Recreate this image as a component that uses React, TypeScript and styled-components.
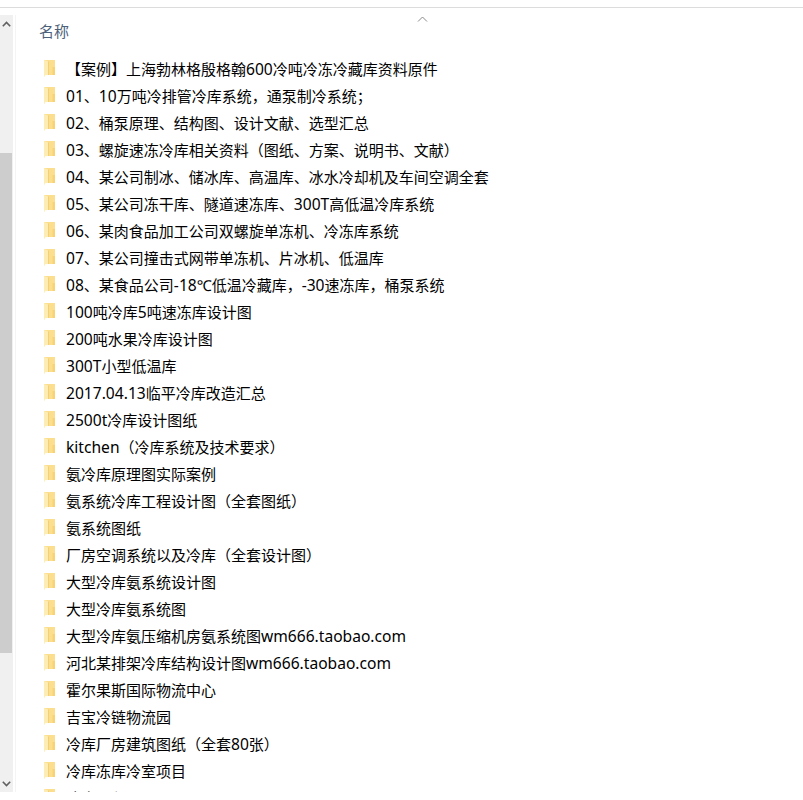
import React from "react";
import styled, { createGlobalStyle } from "styled-components";

const GlobalStyle = createGlobalStyle`
    html, body {
        margin: 0;
        padding: 0;
        background: #fff;
    }
`;

const Page = styled.div`
    width: 803px;
    height: 800px;
    overflow: hidden;
    background: #fff;
    font-family: "Noto Sans", "Noto Sans CJK SC", sans-serif;
`;

const TopEdge = styled.div`
    height: 7px;
    border-bottom: 1px solid #dcdcdc;
    margin-bottom: 7px;
`;

const Explorer = styled.div`
    position: relative;
    display: flex;
    height: 777px;
`;

const ScrollTrack = styled.div`
    width: 13px;
    background: #f0f0f0;
    display: flex;
    flex-direction: column;
    align-items: stretch;
`;

const ScrollButton = styled.div`
    height: 17px;
    display: flex;
    align-items: center;
    justify-content: center;
    color: #606060;
`;

const ScrollRest = styled.div<{ $size: number }>`
    height: ${(p) => p.$size}px;
`;

const ScrollThumb = styled.div`
    height: 500px;
    background: #cdcdcd;
    margin-right: 1px;
`;

const Pane = styled.div`
    flex: 1;
    margin-left: 2px;
    border-left: 1px solid #f4f4f4;
    overflow: hidden;
    padding-left: 23px;
`;

const ColumnHeader = styled.div`
    height: 30px;
    display: flex;
    align-items: center;
    font-size: 15px;
    color: #4c607a;
    margin-bottom: 10px;
`;

const SortArrow = styled.svg`
    position: absolute;
    left: 417px;
    top: 0;
`;

const FileList = styled.ul`
    list-style: none;
    margin: 0;
    padding: 0 0 0 4px;
`;

const Row = styled.li`
    height: 27px;
    display: flex;
    align-items: center;
    gap: 9px;
    font-size: 15px;
    color: #000;
    white-space: nowrap;
`;

// latin runs come out a little small next to the CJK at 15px
const Latin = styled.span`
    font-size: 15.6px;
`;

const names = [
    "【案例】上海勃林格殷格翰600冷吨冷冻冷藏库资料原件",
    "01、10万吨冷排管冷库系统，通泵制冷系统；",
    "02、桶泵原理、结构图、设计文献、选型汇总",
    "03、螺旋速冻冷库相关资料（图纸、方案、说明书、文献）",
    "04、某公司制冰、储冰库、高温库、冰水冷却机及车间空调全套",
    "05、某公司冻干库、隧道速冻库、300T高低温冷库系统",
    "06、某肉食品加工公司双螺旋单冻机、冷冻库系统",
    "07、某公司撞击式网带单冻机、片冰机、低温库",
    "08、某食品公司-18℃低温冷藏库，-30速冻库，桶泵系统",
    "100吨冷库5吨速冻库设计图",
    "200吨水果冷库设计图",
    "300T小型低温库",
    "2017.04.13临平冷库改造汇总",
    "2500t冷库设计图纸",
    "kitchen（冷库系统及技术要求）",
    "氨冷库原理图实际案例",
    "氨系统冷库工程设计图（全套图纸）",
    "氨系统图纸",
    "厂房空调系统以及冷库（全套设计图）",
    "大型冷库氨系统设计图",
    "大型冷库氨系统图",
    "大型冷库氨压缩机房氨系统图wm666.taobao.com",
    "河北某排架冷库结构设计图wm666.taobao.com",
    "霍尔果斯国际物流中心",
    "吉宝冷链物流园",
    "冷库厂房建筑图纸（全套80张）",
    "冷库冻库冷室项目",
    "冷库工程",
];

const FolderIcon = () => (
    <svg width="14" height="18" viewBox="0 0 14 18" style={{ flex: "none" }}>
        <path d="M1 0h11v15H1z" fill="#fcdf8e" />
        <path d="M9.5 7H12v8H9.5z" fill="#f8d273" />
        <path d="M5 1.5h1V15H5z" fill="#f4cf74" />
        <path d="M1 0l4 1.5V15l-3 .3L1.4 17H1z" fill="#fdecb4" />
    </svg>
);

const ChevronUp = () => (
    <svg width="9" height="6" viewBox="0 0 9 6" fill="none" stroke="currentColor" strokeWidth="1.6">
        <path d="M0.8 5.2 4.5 1.4 8.2 5.2" />
    </svg>
);

const ChevronDown = () => (
    <svg width="9" height="6" viewBox="0 0 9 6" fill="none" stroke="currentColor" strokeWidth="1.6">
        <path d="M0.8 0.8 4.5 4.6 8.2 0.8" />
    </svg>
);

const FileName: React.FC<{ name: string }> = ({ name }) => (
    <span>
        {name.split(/([\x21-\x7e]+)/).map((part, i) =>
            i % 2 ? <Latin key={i}>{part}</Latin> : part
        )}
    </span>
);

export default function App() {
    return (
        <Page>
            <GlobalStyle />
            <TopEdge />
            <Explorer>
                <ScrollTrack>
                    <ScrollButton>
                        <ChevronUp />
                    </ScrollButton>
                    <ScrollRest $size={121} />
                    <ScrollThumb />
                    <ScrollRest $size={122} />
                    <ScrollButton>
                        <ChevronDown />
                    </ScrollButton>
                </ScrollTrack>
                <Pane>
                    <ColumnHeader>名称</ColumnHeader>
                    <FileList>
                        {names.map((name) => (
                            <Row key={name}>
                                <FolderIcon />
                                <FileName name={name} />
                            </Row>
                        ))}
                    </FileList>
                </Pane>
                <SortArrow width="11" height="8" viewBox="0 0 11 8" fill="none" stroke="#8a8a8a" strokeWidth="1">
                    <path d="M1 6.5 5.5 2 10 6.5" />
                </SortArrow>
            </Explorer>
        </Page>
    );
}
